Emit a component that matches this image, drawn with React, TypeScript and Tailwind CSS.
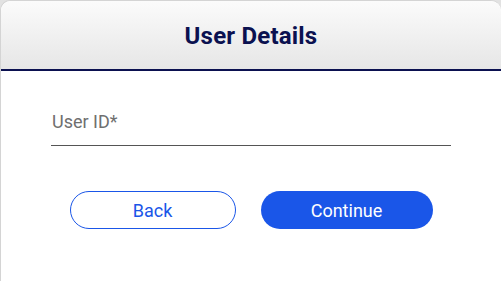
export default function App() {
  return (
    <div
      className="w-[501px] h-[281px] bg-[#e2e2e2] overflow-hidden"
      style={{ fontFamily: "Roboto, 'Liberation Sans', sans-serif" }}
    >
      <div className="h-full bg-white rounded-t-[10px] border-l border-t border-[#d4d4d4] flex flex-col">
        <div className="h-[70px] rounded-tr-[10px] rounded-tl-[10px] bg-gradient-to-b from-[#fbfbfb] to-[#e6e6e6] border-b-2 border-[#0b1150] flex items-center justify-center shrink-0">
          <h1 className="text-[24px] font-bold text-[#0b1150] pt-[1px] tracking-[0.2px]">User Details</h1>
        </div>

        <div className="px-[50px] pt-[39px]">
          <div className="border-b border-[#555555] pb-[11px]">
            <span className="block text-[18px] leading-[24px] text-[#6f6f6f] pl-[1px]">User ID*</span>
          </div>
        </div>

        <div className="flex justify-center gap-[25px] mt-[45px]">
          <button className="w-[166px] h-[38px] rounded-full border border-[#1a56e8] bg-white text-[#1a56e8] text-[18px]">
            Back
          </button>
          <button className="w-[172px] h-[38px] rounded-full bg-[#1a56e8] text-white text-[18px]">
            Continue
          </button>
        </div>
      </div>
    </div>
  );
}
